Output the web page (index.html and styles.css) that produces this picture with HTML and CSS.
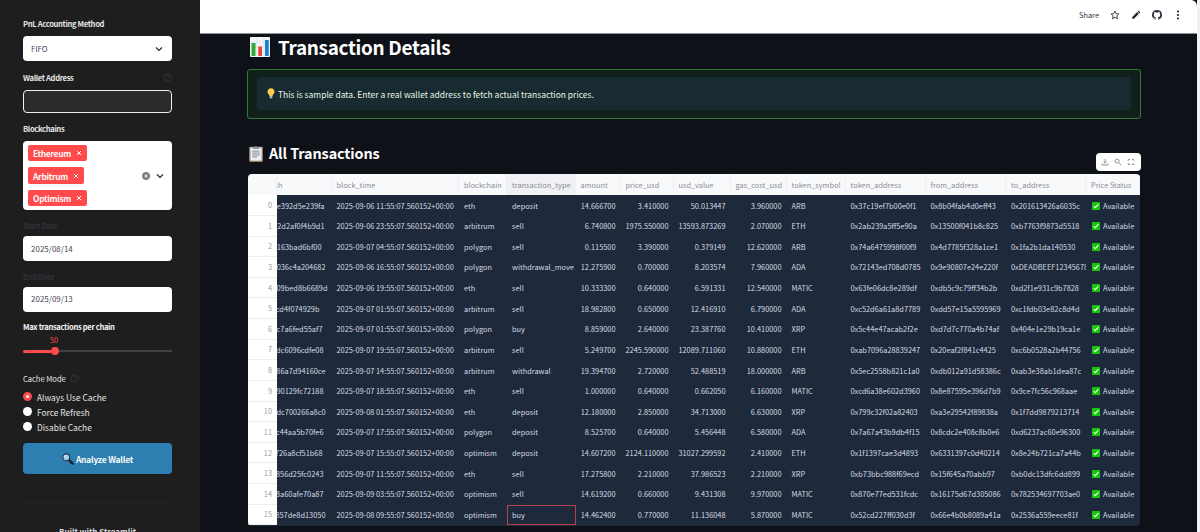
FILE: index.html
```html
<!DOCTYPE html>
<html lang="en">
<head>
    <meta charset="UTF-8">
    <meta name="viewport" content="width=device-width, initial-scale=1.0">
    <title>Transaction Details</title>
    <link rel="stylesheet" href="styles.css">
</head>
<body>
    <div class="app">
        <aside class="sidebar">
            <div class="label">PnL Accounting Method</div>
            <div class="field select">
                <span>FIFO</span>
                <svg class="chevron" viewBox="0 0 8 8"><path d="M1 2.5 4 5.5 7 2.5"/></svg>
            </div>

            <div class="label label-row">
                <span>Wallet Address</span>
                <svg class="help" viewBox="0 0 10 10"><circle cx="5" cy="5" r="4"/><path d="M3.8 4a1.2 1.2 0 1 1 1.7 1.1Q5 5.4 5 6M5 7v.6"/></svg>
            </div>
            <div class="field dark"></div>

            <div class="label">Blockchains</div>
            <div class="multi">
                <div class="tags">
                    <span class="tag">Ethereum <svg viewBox="0 0 6 6"><path d="M1 1 5 5M5 1 1 5"/></svg></span>
                    <span class="tag">Arbitrum <svg viewBox="0 0 6 6"><path d="M1 1 5 5M5 1 1 5"/></svg></span>
                    <span class="tag">Optimism <svg viewBox="0 0 6 6"><path d="M1 1 5 5M5 1 1 5"/></svg></span>
                </div>
                <svg class="clear" viewBox="0 0 8 8"><circle cx="4" cy="4" r="4"/><path d="M2.6 2.6 5.4 5.4M5.4 2.6 2.6 5.4"/></svg>
                <svg class="chevron" viewBox="0 0 8 8"><path d="M1 2.5 4 5.5 7 2.5"/></svg>
            </div>

            <div class="label faint">Start Date</div>
            <div class="field date">2025/08/14</div>
            <div class="label faint">End Date</div>
            <div class="field date">2025/09/13</div>

            <div class="label slider-label">Max transactions per chain</div>
            <div class="slider">
                <div class="slider-value">50</div>
                <div class="track"><div class="fill"></div><div class="thumb"></div><div class="rest"></div></div>
            </div>

            <div class="label cache">
                <span>Cache Mode</span>
                <svg class="help" viewBox="0 0 10 10"><circle cx="5" cy="5" r="4"/><path d="M3.8 4a1.2 1.2 0 1 1 1.7 1.1Q5 5.4 5 6M5 7v.6"/></svg>
            </div>
            <div class="radio checked"><i></i>Always Use Cache</div>
            <div class="radio"><i></i>Force Refresh</div>
            <div class="radio"><i></i>Disable Cache</div>

            <div class="button">
                <svg viewBox="0 0 12 12"><path d="M6.6 6.6 10.6 10.6" stroke="#17232c" stroke-width="2.4" stroke-linecap="round"/><circle cx="4.3" cy="4.3" r="3.4" fill="#9fd3f3" stroke="#26343e" stroke-width="1.1"/><path d="M2.5 4.2a2 2 0 0 1 1.7-1.8" stroke="#fff" stroke-width=".8" fill="none"/></svg>
                Analyze Wallet
            </div>
            <hr>
            <div class="footer">Built with Streamlit</div>
        </aside>

        <div class="page">
            <header class="topbar">
                <span class="share">Share</span>
                <svg viewBox="0 0 10 10"><path d="M5 1.1 6.2 3.7 9 4 6.9 5.9 7.5 8.8 5 7.3 2.5 8.8 3.1 5.9 1 4 3.8 3.7Z" fill="none" stroke="#31333f" stroke-width=".9" stroke-linejoin="round"/></svg>
                <svg viewBox="0 0 10 10"><path d="M1.3 8.7V7L6.2 2.1 7.9 3.8 3 8.7ZM6.7 1.6 7.3 1q.4-.3.8 0L9 1.9q.3.4 0 .8L8.4 3.3Z" fill="#262730"/></svg>
                <svg viewBox="0 0 16 16"><path fill="#31333f" d="M8 0a8 8 0 0 0-2.53 15.59c.4.07.55-.17.55-.38v-1.49c-2.23.49-2.7-.94-2.7-.94-.36-.93-.89-1.18-.89-1.18-.73-.5.05-.49.05-.49.81.06 1.23.83 1.23.83.72 1.23 1.88.87 2.34.67.07-.52.28-.88.5-1.08-1.77-.2-3.64-.89-3.64-3.95 0-.88.31-1.59.82-2.15-.08-.2-.36-1.02.08-2.12 0 0 .67-.21 2.2.82a7.6 7.6 0 0 1 4 0c1.53-1.04 2.2-.82 2.2-.82.44 1.1.16 1.92.08 2.12.51.56.82 1.27.82 2.15 0 3.07-1.87 3.75-3.65 3.95.29.25.54.73.54 1.48v2.2c0 .21.15.46.55.38A8 8 0 0 0 8 0"/></svg>
                <svg viewBox="0 0 10 10"><g fill="#262730"><circle cx="5" cy="1.5" r="1.1"/><circle cx="5" cy="5" r="1.1"/><circle cx="5" cy="8.5" r="1.1"/></g></svg>
            </header>

            <main>
                <h1>
                    <svg viewBox="0 0 20 20"><rect width="20" height="20" rx="1" fill="#f3f5f7"/><path d="M0 5h20M0 10h20M0 15h20M7 0v20M14 0v20" stroke="#d5dce1" stroke-width=".6"/><rect x="1.5" y="6" width="4" height="13" fill="#2eaa3c"/><rect x="8.3" y="9.5" width="3.7" height="9.5" fill="#e8452c"/><rect x="15" y="3" width="3.8" height="16" fill="#1b7fd6"/></svg>
                    <span>Transaction Details</span>
                </h1>

                <div class="notice">
                    <div class="notice-inner">
                        <svg viewBox="0 0 8 11"><path d="M4 .3a3.4 3.4 0 0 1 2 6.2L5.6 8H2.4L2 6.5A3.4 3.4 0 0 1 4 .3" fill="#ffc94d"/><path d="M2.8 2.3 4 1.4" stroke="#fff4c9" stroke-width="1"/><path d="M2.6 8h2.8v1.5L4.8 10.5H3.2L2.6 9.5Z" fill="#a9b2b8"/></svg>
                        <span>This is sample data. Enter a real wallet address to fetch actual transaction prices.</span>
                    </div>
                </div>

                <div class="section-head">
                    <h2>
                        <svg viewBox="0 0 14 17"><rect x=".3" y="1.7" width="13.4" height="15" rx="1" fill="#b9a48f"/><rect x="1.6" y="3" width="10.8" height="12.5" fill="#eceff1"/><path d="M4 3.9V2.2h1.6a1.5 1.5 0 0 1 2.8 0H10v1.7Z" fill="#8d989e"/><path d="M3.2 6.2h7M3.2 8.1h7.6M3.2 10h7.6M3.2 11.9h5" stroke="#858b98" stroke-width="1"/></svg>
                        <span>All Transactions</span>
                    </h2>
                    <div class="toolbar">
                        <svg viewBox="0 0 8 8"><path d="M4 1v4M2.3 3.6 4 5.2 5.7 3.6M1 5.5V7h6V5.5"/></svg>
                        <svg viewBox="0 0 8 8"><circle cx="3.1" cy="3.1" r="2"/><path d="M4.7 4.7 7.2 7.2"/></svg>
                        <svg viewBox="0 0 8 8"><path d="M1.2 3V1.5H3M5 1.5h1.8V3M6.8 5v1.5H5M3 6.5H1.2V5"/></svg>
                    </div>
                </div>

                <div class="table" id="table">
                    <div class="row head">
                        <div class="idx"></div>
                        <div class="hash"><span style="padding-right:48px">hash</span></div>
                        <div>block_time</div>
                        <div>blockchain</div>
                        <div class="active">transaction_type</div>
                        <div>amount</div>
                        <div>price_usd</div>
                        <div>usd_value</div>
                        <div>gas_cost_usd</div>
                        <div>token_symbol</div>
                        <div>token_address</div>
                        <div>from_address</div>
                        <div>to_address</div>
                        <div>Price Status</div>
                    </div>
                </div>
            </main>
        </div>
        <div class="scrollbar"></div>
    </div>
    <script src="script.js"></script>
</body>
</html>
```
FILE: script.js
```js
// hash, distance of its end from the column edge, time, chain, type, amount, price, value, gas, symbol, token, from, to
const rows = [
    ["e392d5e239fa", 7, "2025-09-06 11", "eth", "deposit", "14.666700", "3.410000", "50.013447", "3.960000", "ARB", "0x37c19ef7b00e0f1", "0x8b04fab4d0eff43", "0x201613426a6035c"],
    ["2d2af0f4b9d1", 7, "2025-09-06 23", "arbitrum", "sell", "6.740800", "1975.550000", "13593.873269", "2.070000", "ETH", "0x2ab239a5ff5e90a", "0x13500f041b8c825", "0xb7763f9873d5518"],
    ["163bad6bf00", 10, "2025-09-07 04", "polygon", "sell", "0.115500", "3.390000", "0.379149", "12.620000", "ARB", "0x74a6475998f00f9", "0x4d7785f328a1ce1", "0x1fa2b1da140530"],
    ["036c4a204682", 6, "2025-09-06 16", "polygon", "withdrawal_move", "12.275900", "0.700000", "8.203574", "7.960000", "ADA", "0x72143ed708d0785", "0x9e90807e24e220f", "0xDEADBEEF12345678"],
    ["09bed8b6689d", 4, "2025-09-06 19", "eth", "sell", "10.333300", "0.640000", "6.591331", "12.540000", "MATIC", "0x63fe06dc8e289df", "0xdb5c9c79ff34b2b", "0xd2f1e931c9b7828"],
    ["cd4f074929b", 12, "2025-09-07 01", "arbitrum", "sell", "18.982800", "0.650000", "12.416910", "6.790000", "ADA", "0xc52d6a61a8d7789", "0xdd57e15a5595969", "0xc1fdb03e82c8d4d"],
    ["c7a6fed55af7", 9, "2025-09-07 01", "polygon", "buy", "8.859000", "2.640000", "23.387760", "10.410000", "XRP", "0x5c44e47acab2f2e", "0xd7d7c770a4b74af", "0x404e1e29b19ca1e"],
    ["dc6096cdfe08", 8, "2025-09-07 19", "arbitrum", "sell", "5.249700", "2245.590000", "12089.711060", "10.880000", "ETH", "0xab7096a28839247", "0x20eaf2f841c4425", "0xc6b0528a2b44756"],
    ["86a7d94160ce", 6, "2025-09-07 14", "arbitrum", "withdrawal", "19.394700", "2.720000", "52.488519", "18.000000", "ARB", "0x5ec2558b821c1a0", "0xdb012a91d58386c", "0xab3e38ab1dea87c"],
    ["90129fc72188", 8, "2025-09-07 18", "eth", "sell", "1.000000", "0.640000", "0.662050", "6.160000", "MATIC", "0xcd6a38e602d3960", "0x8e87595e396d7b9", "0x9ce7fc56c968aae"],
    ["dc700266a8c0", 6, "2025-09-08 01", "eth", "deposit", "12.180000", "2.850000", "34.713000", "6.630000", "XRP", "0x799c32f02a82403", "0xa3e29542f89838a", "0x1f7dd9879213714"],
    ["c44aa5b70fe6", 8, "2025-09-07 17", "polygon", "deposit", "8.525700", "0.640000", "5.456448", "6.580000", "ADA", "0x7a67a43b9db4f15", "0x8cdc2e408c8b0e6", "0xd6237ac60e96300"],
    ["726a8cf51b68", 9, "2025-09-07 15", "optimism", "deposit", "14.607200", "2124.110000", "31027.299592", "2.410000", "ETH", "0x1f1397cae3d4893", "0x6331397c0d40214", "0x8e24b721ca7a44b"],
    ["856d25fc0243", 8, "2025-09-07 11", "eth", "sell", "17.275800", "2.210000", "37.986523", "2.210000", "XRP", "0xb73bbc988f69ecd", "0x15f645a70abb97", "0xb0dc13dfc6dd899"],
    ["8a60afe70a87", 8, "2025-09-09 03", "optimism", "sell", "14.619200", "0.660000", "9.431308", "9.970000", "MATIC", "0x870e77ed531fcdc", "0x16175d67d305086", "0x782534697703ae0"],
    ["857de8d13050", 6, "2025-09-08 09", "optimism", "buy", "14.462400", "0.770000", "11.136048", "5.870000", "MATIC", "0x52cd227ff030d3f", "0x66e4b0b8089a41a", "0x2536a559eece81f"]
];

const check = '<svg viewBox="0 0 8 8"><rect width="8" height="8" rx=".6" fill="#16c60c"/><path d="M1.7 4.2 3.3 5.8 6.4 2.2" fill="none" stroke="#fff" stroke-width="1.1"/></svg>';
const table = document.getElementById("table");

rows.forEach((r, i) => {
    const [hash, end, time, chain, type, ...rest] = r;
    const nums = rest.slice(0, 4).map(v => `<div class="num">${v}</div>`).join("");
    const texts = rest.slice(4).map(v => `<div>${v}</div>`).join("");
    const row = document.createElement("div");
    row.className = "row";
    row.innerHTML = `<div class="idx">${i}</div>
        <div class="hash"><span style="padding-right:${end}px">${hash}</span></div>
        <div>${time}:55:07.560152+00:00</div>
        <div>${chain}</div>
        <div class="${i === 15 ? "selected" : ""}">${type}</div>
        ${nums}${texts}
        <div class="status">${check}Available</div>`;
    table.appendChild(row);
});
```
FILE: styles.css
```css
* {
    box-sizing: border-box;
}
body {
    margin: 0;
    font-family: "Noto Sans CJK SC", "Noto Sans", sans-serif;
    font-size: 8px;
    line-height: 10px;
    color: #fafafa;
    background: #f1f2f4;
    overflow: hidden;
}
svg {
    display: block;
    flex: none;
}
.app {
    display: flex;
    width: 1200px;
    height: 532px;
    overflow: hidden;
}

/* Sidebar */
.sidebar {
    flex: none;
    width: 200px;
    padding: 18px 28px 0 23px;
    background: #1e1e1e;
}
.label {
    height: 11px;
    line-height: 11px;
    font-size: 7.6px;
    font-weight: 700;
    letter-spacing: -.33px;
    color: #e4e4e4;
    white-space: nowrap;
}
.label-row {
    display: flex;
    justify-content: space-between;
    align-items: center;
}
.help {
    width: 9px;
    height: 9px;
    fill: none;
    stroke: #34353b;
    stroke-width: 1;
}
.field {
    display: flex;
    align-items: center;
    height: 25px;
    margin: 7px 0 11px;
    padding: 0 8px;
    border-radius: 4px;
    background: #fff;
    color: #454752;
    font-size: 7.8px;
}
.select {
    justify-content: space-between;
    padding-right: 9px;
}
.chevron {
    width: 8px;
    height: 8px;
    fill: none;
    stroke: #262730;
    stroke-width: 1.2;
}
.dark {
    height: 23px;
    margin: 7px 0 10px;
    background: #2b2b2b;
    border: 1px solid #f0f0f0;
}
.multi {
    display: flex;
    align-items: center;
    height: 69px;
    margin: 7px 0 11px;
    padding: 0 8px 0 5px;
    border-radius: 4px;
    background: #fff;
}
.tags {
    display: flex;
    flex-direction: column;
    align-items: flex-start;
    gap: 6px;
    margin-right: auto;
}
.tag {
    display: flex;
    align-items: center;
    gap: 5px;
    height: 16.5px;
    padding: 0 5px;
    border-radius: 2px;
    background: #ff4b4b;
    font-size: 8.4px;
    font-weight: 700;
    letter-spacing: -.32px;
}
.tag svg {
    width: 6px;
    height: 6px;
    stroke: #fff;
    stroke-width: 1;
}
.clear {
    width: 8px;
    height: 8px;
    margin-right: 6px;
    fill: #7d808c;
}
.clear path {
    stroke: #fff;
    stroke-width: .9;
}
.faint {
    height: 10px;
    line-height: 10px;
    color: #303138;
}
.date {
    margin: 5px 0 10.5px;
    font-size: 8px;
}
.slider-label {
    margin-top: -1px;
    color: #f4f4f4;
}
.slider-value {
    width: 20px;
    margin: 3px 0 0 21px;
    color: #ff4b4b;
    font-size: 7.2px;
    line-height: 10px;
    text-align: center;
}
.track {
    display: flex;
    align-items: center;
    height: 8px;
    margin-top: 2px;
}
.fill {
    width: 28px;
    height: 3px;
    border-radius: 2px 0 0 2px;
    background: #ff4b4b;
}
.thumb {
    width: 8px;
    height: 8px;
    border-radius: 50%;
    background: #ff4b4b;
}
.rest {
    flex: 1;
    height: 2.5px;
    background: #414247;
}
.cache {
    display: flex;
    align-items: center;
    gap: 4px;
    margin: 18px 0 5px;
    font-weight: 400;
    letter-spacing: -.05px;
}
.radio {
    display: flex;
    align-items: center;
    gap: 5px;
    height: 15px;
    color: #e4e4e4;
    font-size: 8.4px;
}
.radio i {
    width: 9px;
    height: 9px;
    border-radius: 50%;
    background: #fff;
}
.radio.checked i {
    border: 3px solid #ff4b4b;
}
.button {
    display: flex;
    align-items: center;
    justify-content: center;
    gap: 2px;
    height: 31px;
    margin-top: 9px;
    border-radius: 4px;
    background: #2d7fb1;
    font-size: 8.4px;
    font-weight: 700;
    letter-spacing: -.2px;
}
.button svg {
    width: 12px;
    height: 12px;
}
hr {
    height: 1px;
    margin: 28px 0 24px;
    border: 0;
    background: #252525;
}
.footer {
    text-align: center;
    font-size: 8px;
    font-weight: 700;
    color: #d8d8d8;
}

/* Main area */
.page {
    width: 997px;
    background: #0e1117;
}
.topbar {
    display: flex;
    align-items: center;
    justify-content: flex-end;
    gap: 11px;
    height: 34px;
    padding: 0 14px 3px 0;
    background: #fff;
    border-bottom: 1px solid #8d9094;
    border-radius: 0 6px 0 0;
    color: #31333f;
}
.topbar svg {
    width: 10px;
    height: 10px;
}
.share {
    font-size: 7.4px;
}
.scrollbar {
    width: 3px;
    background: #f1f2f4;
}
main {
    width: 894px;
    margin-left: 47px;
}
h1, h2 {
    display: flex;
    align-items: center;
    margin: 0;
    color: #fff;
    white-space: nowrap;
}
h1 {
    height: 25px;
    padding-left: 3px;
    gap: 8px;
    font-size: 18.9px;
    letter-spacing: -.3px;
}
h1 svg {
    width: 20px;
    height: 20px;
}
.notice {
    height: 50px;
    margin-top: 10px;
    padding: 7px 9px 8px;
    border: 1px solid #2b7a38;
    border-radius: 3px;
    background: #11201a;
}
.notice-inner {
    display: flex;
    align-items: center;
    gap: 3px;
    height: 33px;
    padding-left: 10px;
    border-radius: 4px;
    background: #172b30;
    color: #e8f5e6;
    font-size: 8.48px;
}
.notice svg {
    width: 8px;
    height: 11px;
}
.section-head {
    display: flex;
    justify-content: space-between;
    height: 55px;
    padding-top: 25px;
}
h2 {
    height: 18px;
    padding-left: 2px;
    gap: 6px;
    font-size: 14.4px;
    letter-spacing: -.1px;
}
h2 svg {
    width: 14px;
    height: 17px;
}
.toolbar {
    display: flex;
    align-items: center;
    gap: 5px;
    width: 45px;
    height: 18px;
    margin-top: 8.5px;
    padding: 0 5px;
    border-radius: 4px;
    background: #fff;
}
.toolbar svg {
    width: 8px;
    height: 8px;
    fill: none;
    stroke: #777983;
    stroke-width: .8;
}

/* Transactions table */
.table {
    width: 892px;
    height: 352px;
    margin-left: 1px;
    border-radius: 4px;
    overflow: hidden;
    background: #1e293b;
}
.row {
    display: grid;
    grid-template-columns: 29px 54.5px 127.5px 48px 68.5px 45px 53px 57px 56px 59px 80px 80.5px 80px 54px;
    height: 20.63px;
    font-size: 7.39px;
    color: #d5dae3;
}
.row > div {
    display: flex;
    align-items: center;
    padding: 0 0 0 5px;
    overflow: hidden;
    white-space: nowrap;
}
.row > .num {
    justify-content: flex-end;
    padding: 0 5px 0 0;
}
.row > .idx {
    justify-content: flex-end;
    padding-right: 5px;
    background: #fff;
    border-bottom: 1px solid #eceef1;
    color: #9a9ca5;
}
.row > .hash {
    justify-content: flex-end;
    padding: 0;
}
.row > .status {
    gap: 3px;
    padding-left: 6px;
}
.status svg {
    width: 8px;
    height: 8px;
}
.row > .selected {
    border: 1px solid #b5444e;
    padding-left: 4px;
}
.head {
    height: 21.3px;
    color: #8b8d97;
}
.head > div,
.head > .idx {
    background: #f8f9fb;
    border-right: 1px solid #eef0f3;
    border-bottom: 0;
}
.head > .active {
    background: #eff1f4;
}
```
